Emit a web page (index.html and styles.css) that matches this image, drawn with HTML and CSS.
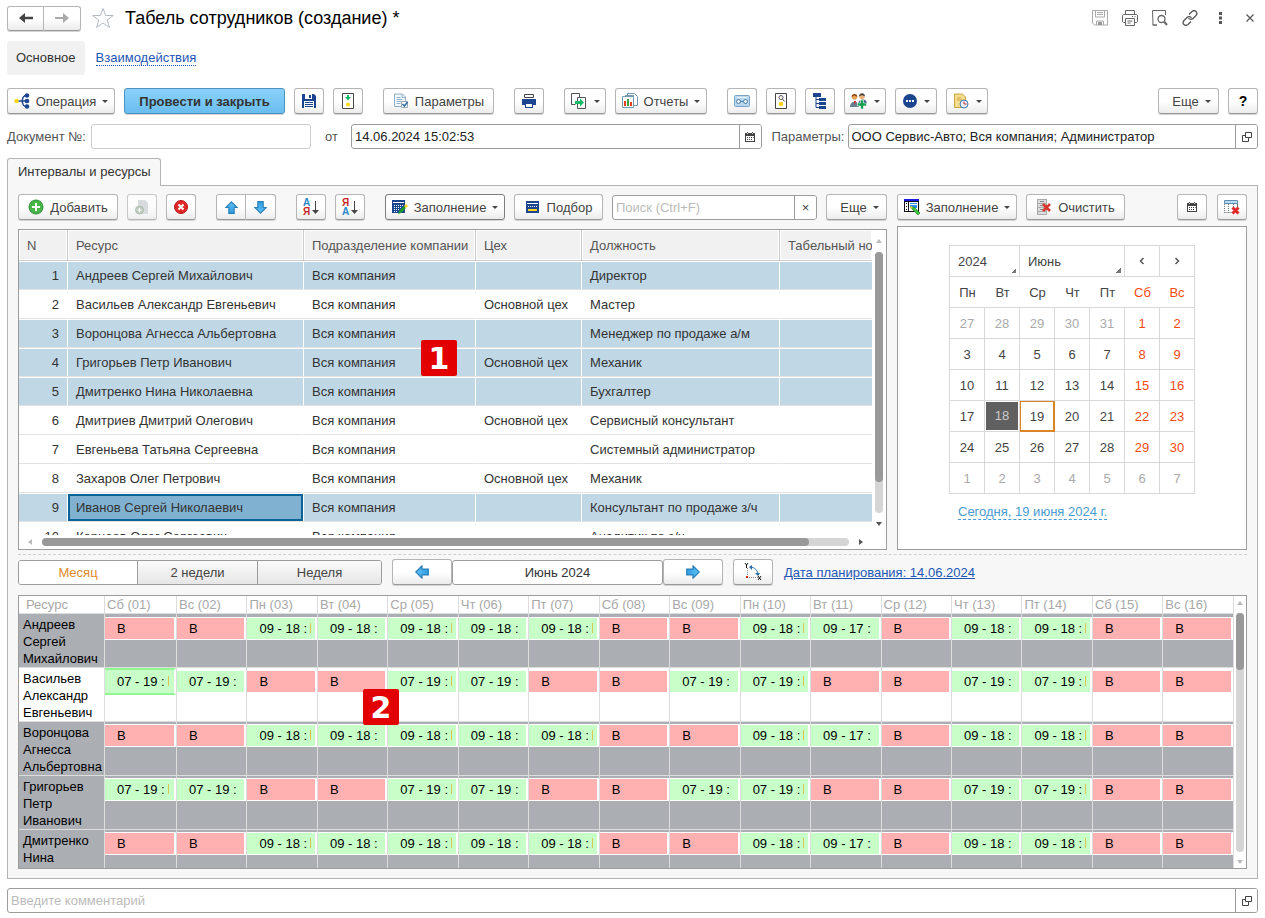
FILE: index.html
```html
<!DOCTYPE html>
<html lang="ru">
<head>
<meta charset="utf-8">
<title>Табель сотрудников (создание) *</title>
<link rel="stylesheet" href="styles.css">
</head>
<body>
<svg class="defs" aria-hidden="true">
  <defs>
    <linearGradient id="blue" x1="0" y1="0" x2="0" y2="1"><stop offset="0" stop-color="#5fc0f5"/><stop offset="1" stop-color="#2f9de0"/></linearGradient>
    <symbol id="cal" viewBox="0 0 10 10"><path d="M0 1h10v9H0z" fill="#444"/><path d="M1 4h8v5H1z" fill="#fff"/><path d="M2 0h1v2H2zM7 0h1v2H7z" fill="#444"/><path d="M2 5h1v1H2zM4 5h1v1H4zM6 5h1v1H6zM2 7h1v1H2zM4 7h1v1H4zM6 7h1v1H6zM8 5h.6v1H8z" fill="#444"/><path d="M2 1h1v1H2zM7 1h1v1H7z" fill="#ddd"/></symbol>
    <symbol id="open" viewBox="0 0 10 10"><path d="M3.500.5h6v5h-6zM3 3.500H.5v6h6V6" fill="none" stroke="#444"/></symbol>
    <symbol id="up" viewBox="0 0 12 12"><path d="M6 .7 11.300 6H8.500v5.400h-5V6H.7z" fill="url(#blue)" stroke="#2a7fb8"/></symbol>
    <symbol id="calc" viewBox="0 0 16 16"><path d="M0 1h13v13H0z" fill="#1c4590"/><path d="M1 3h11v1H1z" fill="#fff"/><path d="M2 6h1v1H2zM4 6h1v1H4zM6 6h1v1H6zM8 6h1v1H8zM10 6h1v1h-1zM2 8h1v1H2zM4 8h1v1H4zM6 8h1v1H6zM8 8h1v1H8zM2 10h1v1H2zM4 10h1v1H4zM6 10h1v1H6zM2 12h1v1H2zM4 12h1v1H4z" fill="#fff"/></symbol>
  </defs>
</svg>
<div class="page">
  <header class="titlebar">
    <div class="pair">
      <button class="btn nav" aria-label="Назад"><svg width="14" height="12" viewBox="0 0 14 12"><path d="M0 6l6-5v3.800h8v2.400H6V11z" fill="#444"/></svg></button><button class="btn nav" aria-label="Вперед"><svg width="14" height="12" viewBox="0 0 14 12"><path d="M14 6L8 1v4H0v2h8v4z" fill="#aaa"/></svg></button>
    </div>
    <svg class="star" width="24" height="22" viewBox="0 0 24 22"><path d="M12 1.500l2.700 7h7.600l-6.100 4.600 2.300 7.400L12 16l-6.500 4.500 2.300-7.400L1.700 8.500h7.600z" fill="#fff" stroke="#b4bac2"/></svg>
    <h1>Табель сотрудников (создание) *</h1>
    <div class="tools">
      <svg width="16" height="16" viewBox="0 0 16 16" fill="none" stroke="#aaa"><path d="M.5.5h15v14.500H2.500l-2-2z"/><path d="M3.500.5v6.500h9V.5M5 2.500h6M5 4.500h6M4.500 15v-4h7v4"/><path d="M6 12h4v3H6z" fill="#999" stroke="none"/></svg>
      <svg width="16" height="16" viewBox="0 0 16 16" fill="none" stroke="#666"><path d="M3.500 4V.5h9V4M3.500 12.500h-2l-1-1v-6l1-1h13l1 1v6l-1 1h-2M3.500 8.500h9v7h-9zM5.500 11h5M5.500 13h3M10 6.500h1M12.500 6.500h1"/></svg>
      <svg width="16" height="16" viewBox="0 0 16 16" fill="none" stroke="#666"><path d="M5 15H1L.5.5h13V5M.5 15H5"/><circle cx="9.500" cy="9" r="3.500" stroke-width="1.300"/><path d="M12 11.500l3 3.500" stroke-width="2"/></svg>
      <svg width="16" height="16" viewBox="0 0 16 16" fill="none" stroke="#555" stroke-width="1.300"><path d="M7 4.500l3-3c2.500-2.500 6.500 1 4 4l-3 3c-1.500 1.500-3.500 1-4.500-.5M9 11.500l-3 3c-3 2.500-6.500-1-4-4l3-3c1.500-1.500 3.500-1 4.500.5"/></svg>
      <svg width="16" height="16" viewBox="0 0 16 16" fill="#555"><path d="M7 2h3v3H7zM7 6.500h3v3H7zM7 11h3v3H7z"/></svg>
      <svg width="16" height="16" viewBox="0 0 16 16" fill="none" stroke="#555" stroke-width="1.200"><path d="M4.500 4.500l7 7M11.500 4.500l-7 7"/></svg>
    </div>
  </header>

  <nav class="sections"><a class="current" href="#">Основное</a><a class="dotted" href="#">Взаимодействия</a></nav>

  <div class="bar commands">
    <button class="btn w108"><svg width="16" height="16" viewBox="0 0 16 16"><path d="M3 8h9M13 2.500c-4 0-4 2-5 5.500 1 3.500 1 5.500 5 5.500" fill="none" stroke="#1c4590" stroke-width="1.500"/><circle cx="2.500" cy="8" r="2.300" fill="#fbd51e"/><circle cx="13" cy="2.500" r="2.300" fill="#1c4590"/><circle cx="13" cy="8" r="2.300" fill="#1c4590"/><circle cx="13" cy="13.500" r="2.300" fill="#1c4590"/></svg><span>Операция</span><i class="caret"></i></button>
    <button class="btn primary">Провести и закрыть</button>
    <button class="btn icon" aria-label="Записать"><svg width="16" height="16" viewBox="0 0 16 16"><path d="M1 1h12l2 2v12H1z" fill="#1c4590"/><path d="M4 1h7v5H4z" fill="#fff"/><path d="M8 2h2v3H8z" fill="#1c4590"/><path d="M3 8h10v7H3z" fill="#fff"/><path d="M4 9h8v1H4zM4 11h8v1H4zM4 13h8v1H4z" fill="#1c4590"/></svg></button>
    <button class="btn icon" aria-label="Провести"><svg width="16" height="16" viewBox="0 0 16 16"><path d="M2.500.5h11v15h-11z" fill="#fff" stroke="#444"/><path d="M7 2h2v2h2L8 7.500 5 4h2z" fill="#14b866"/><circle cx="8" cy="11.500" r="2" fill="#fbd51e"/></svg></button>
    <button class="btn w111 gap"><svg width="16" height="16" viewBox="0 0 16 16"><path d="M1.500 1h8l3 3v9.500h-11z" fill="#f5f9fc" stroke="#8fb0c8"/><path d="M9 1v3.500h3.500M3.500 4.500h4M3.500 6.500h6M3.500 8.500h5M3.500 10.500h4" fill="none" stroke="#8fb0c8"/><path d="M8.500 8.500h6v6h-6z" fill="#fff" stroke="#9ab"/><path d="M9.500 11l2 2 3-4" fill="none" stroke="#2a6da5" stroke-width="1.500"/></svg><span>Параметры</span></button>
    <button class="btn icon gap" aria-label="Печать"><svg width="16" height="16" viewBox="0 0 16 16"><path d="M3.500 1.500h9v3h-9z" fill="#fff" stroke="#444"/><path d="M1 6h14v6H1z" fill="#1c4590"/><path d="M4 9h8v6H4z" fill="#1c4590"/><path d="M5 11h6v3H5z" fill="#fff"/></svg></button>
    <button class="btn drop gap" aria-label="Создать на основании"><svg width="18" height="16" viewBox="0 0 18 16"><path d="M9.500 4V.5h-8v11h4M7.500 4.500h8v11h-8z" fill="none" stroke="#555"/><path d="M5 8h5V5.500l4 4-4 4V11H5z" fill="#14b866"/></svg><i class="caret"></i></button>
    <button class="btn w92"><svg width="16" height="16" viewBox="0 0 16 16"><path d="M5.500.5h7l3 3v9h-10zM3.500 2.500h8v10h-8z" fill="#fff" stroke="#6f9ab0"/><path d="M.5 3.500h11v11H.5z" fill="#fff" stroke="#6f9ab0"/><path d="M2 8h2v5H2z" fill="#e0401c"/><path d="M5 6h2v7H5z" fill="#3aa03a"/><path d="M8 9h2v4H8z" fill="#e0401c"/></svg><span>Отчеты</span><i class="caret"></i></button>
    <button class="btn icon gap" aria-label="Запись"><svg width="16" height="12" viewBox="0 0 16 12"><rect x=".5" y=".5" width="15" height="11" rx="1" fill="#b8d8f0" stroke="#7ba4c4"/><path d="M3 2.500h10" stroke="#e8f3fb"/><circle cx="4.500" cy="6.500" r="2" fill="#e8f3fb" stroke="#4c7ea5"/><circle cx="11.500" cy="6.500" r="2" fill="#e8f3fb" stroke="#4c7ea5"/><path d="M6.500 6.500h3" stroke="#4c7ea5"/></svg></button>
    <button class="btn icon" aria-label="Просмотр"><svg width="16" height="16" viewBox="0 0 16 16"><path d="M2.500.5h11v15h-11z" fill="#fff" stroke="#444"/><circle cx="8" cy="4.500" r="2" fill="none" stroke="#555"/><path d="M9.500 6l2 2.500" stroke="#555"/><circle cx="8" cy="11" r="2.300" fill="#fbd51e"/></svg></button>
    <button class="btn icon" aria-label="Структура"><svg width="16" height="16" viewBox="0 0 16 16" fill="#1c4590"><path d="M1 0h8v4H1zM7 5h7v3H7zM7 9h7v3H7zM7 13h7v3H7z"/><path d="M4 4v10.500h3M4 6.500h3M4 10.500h3" fill="none" stroke="#1c4590"/></svg></button>
    <button class="btn drop" aria-label="Сотрудники"><svg width="18" height="16" viewBox="0 0 18 16"><circle cx="4.500" cy="4" r="2.700" fill="#e8a45a"/><path d="M1.500 4c0-4 6-4 6 0L4.500 2.500z" fill="#8a4a18"/><circle cx="12" cy="3.500" r="2.700" fill="#edb27a"/><path d="M9 3.500c0-4.500 6-4.500 6 0l-3-1.500z" fill="#444"/><path d="M0 14c0-7 9-7 9 0z" fill="#6b7f92"/><path d="M8 12c0-7 9-7 9-1z" fill="#3e5d85"/><path d="M4 8l.6 4L6 8z" fill="#d22"/><path d="M10.500 7h3v3h3v3h-3v3h-3v-3h-3v-3h3z" fill="#12a050" stroke="#fff" stroke-width=".6"/></svg><i class="caret"></i></button>
    <button class="btn drop" aria-label="Действия"><svg width="16" height="16" viewBox="0 0 16 16"><circle cx="8" cy="8" r="7" fill="#1c4590"/><path d="M4 7h2v2H4zM7 7h2v2H7zM10 7h2v2h-2z" fill="#fff"/></svg><i class="caret"></i></button>
    <button class="btn drop" aria-label="История"><svg width="18" height="16" viewBox="0 0 18 16"><path d="M2.500 1h8l3 3v10.500h-11z" fill="#f6dc8c" stroke="#c9a646"/><path d="M5 5h4M5 7h5" stroke="#c9a646"/><circle cx="12" cy="11" r="4" fill="#e6f1fa" stroke="#3d78b4"/><path d="M12 8.500V11h2.500" fill="none" stroke="#c22"/></svg><i class="caret"></i></button>
    <button class="btn w61 push"><span>Еще</span><i class="caret"></i></button>
    <button class="btn icon help">?</button>
  </div>

  <div class="form">
    <label class="l-doc" for="doc">Документ №:</label>
    <div class="field doc"><input id="doc" type="text"></div>
    <label class="l-from" for="date">от</label>
    <div class="field dark grow"><input id="date" type="text" value="14.06.2024 15:02:53"><button aria-label="Выбрать дату"><svg width="10" height="10"><use href="#cal"/></svg></button></div>
    <label class="l-par" for="par">Параметры:</label>
    <div class="field dark grow"><input id="par" type="text" value="ООО Сервис-Авто; Вся компания; Администратор"><button aria-label="Открыть"><svg width="10" height="10"><use href="#open"/></svg></button></div>
  </div>

  <div class="tab">Интервалы и ресурсы</div>
  <main class="panel">
    <div class="panes">
      <section class="left">
        <div class="bar">
          <button class="btn w100"><svg width="16" height="16" viewBox="0 0 16 16"><circle cx="8" cy="8" r="7" fill="#48b648" stroke="#2b8f35"/><path d="M7 4h2v3h3v2H9v3H7V9H4V7h3z" fill="#fff"/></svg><span>Добавить</span></button>
          <button class="btn icon off" aria-label="Скопировать" disabled><svg width="16" height="16" viewBox="0 0 16 16"><path d="M4 1h7l3 3v11H4z" fill="#ccd0d3"/><circle cx="5.500" cy="11" r="4" fill="#a9bcab" stroke="#8fa892"/><path d="M5 9h1v1.500h1.500v1H6V13H5v-1.500H3.500v-1H5z" fill="#fff"/></svg></button>
          <button class="btn icon" aria-label="Удалить"><svg width="16" height="16" viewBox="0 0 16 16"><circle cx="8" cy="8" r="6.500" fill="#e02828" stroke="#b81818"/><path d="M5.500 5.500l5 5M10.500 5.500l-5 5" stroke="#fff" stroke-width="2"/></svg></button>
          <div class="pair gap"><button class="btn icon" aria-label="Вверх"><svg width="13" height="13"><use href="#up"/></svg></button><button class="btn icon" aria-label="Вниз"><svg class="r180" width="13" height="13"><use href="#up"/></svg></button></div>
          <button class="btn icon gap" aria-label="По возрастанию"><span class="sort"><b class="b">А</b><b class="r">Я</b></span><svg width="7" height="15" viewBox="0 0 7 15"><path d="M3 1h1v9h3l-3.500 4L0 10h3z" fill="#444"/></svg></button>
          <button class="btn icon" aria-label="По убыванию"><span class="sort"><b class="r">Я</b><b class="b">А</b></span><svg width="7" height="15" viewBox="0 0 7 15"><path d="M3 1h1v9h3l-3.500 4L0 10h3z" fill="#444"/></svg></button>
          <button class="btn w120 strong gap"><svg width="16" height="16" viewBox="0 0 16 16"><use href="#calc"/><path d="M6 15l1-3 5-5 2 2-5 5z" fill="#1f9b2c"/><path d="M12 7l2-2 2 2-2 2z" fill="#fbd51e"/></svg><span>Заполнение</span><i class="caret"></i></button>
          <button class="btn w89"><svg width="16" height="16" viewBox="0 0 16 16"><path d="M1 2h13v12H1z" fill="#1c4590"/><path d="M2 4h11v1H2z" fill="#fff"/><path d="M3 7h1v1H3zM5 7h1v1H5zM7 7h1v1H7zM9 7h1v1H9zM11 7h1v1h-1z" fill="#fff"/><path d="M3 10h9v2H3z" fill="#fbd51e"/></svg><span>Подбор</span></button>
          <div class="field dark grow"><input type="text" aria-label="Поиск" placeholder="Поиск (Ctrl+F)"><button aria-label="Очистить поиск">×</button></div>
          <button class="btn w61"><span>Еще</span><i class="caret"></i></button>
        </div>
        <div class="grid">
          <div class="grid-main">
          <div class="grid-view">
            <table class="res">
              <colgroup><col class="c1"><col class="c2"><col class="c3"><col class="c4"><col class="c5"><col></colgroup>
              <thead><tr><th>N</th><th>Ресурс</th><th>Подразделение компании</th><th>Цех</th><th>Должность</th><th>Табельный номер</th></tr></thead>
              <tbody>
                <tr class="sel"><td>1</td><td>Андреев Сергей Михайлович</td><td>Вся компания</td><td></td><td>Директор</td><td></td></tr>
                <tr><td>2</td><td>Васильев Александр Евгеньевич</td><td>Вся компания</td><td>Основной цех</td><td>Мастер</td><td></td></tr>
                <tr class="sel"><td>3</td><td>Воронцова Агнесса Альбертовна</td><td>Вся компания</td><td></td><td>Менеджер по продаже а/м</td><td></td></tr>
                <tr class="sel"><td>4</td><td>Григорьев Петр Иванович</td><td>Вся компания</td><td>Основной цех</td><td>Механик</td><td></td></tr>
                <tr class="sel"><td>5</td><td>Дмитренко Нина Николаевна</td><td>Вся компания</td><td></td><td>Бухгалтер</td><td></td></tr>
                <tr><td>6</td><td>Дмитриев Дмитрий Олегович</td><td>Вся компания</td><td>Основной цех</td><td>Сервисный консультант</td><td></td></tr>
                <tr><td>7</td><td>Евгеньева Татьяна Сергеевна</td><td>Вся компания</td><td></td><td>Системный администратор</td><td></td></tr>
                <tr><td>8</td><td>Захаров Олег Петрович</td><td>Вся компания</td><td>Основной цех</td><td>Механик</td><td></td></tr>
                <tr class="sel"><td>9</td><td class="active">Иванов Сергей Николаевич</td><td>Вся компания</td><td></td><td>Консультант по продаже з/ч</td><td></td></tr>
                <tr><td>10</td><td>Корнеев Олег Сергеевич</td><td>Вся компания</td><td></td><td>Аналитик по з/ч</td><td></td></tr>
              </tbody>
            </table>
          </div>
          <div class="hscroll"><i class="tri l"></i><div class="track"><div class="thumb"></div></div><i class="tri r"></i></div>
          </div>
          <div class="vscroll"><i class="tri u"></i><div class="track"><div class="thumb"></div></div><i class="tri d"></i></div>
          <span class="badge one">1</span>
        </div>
      </section>
      <section class="right">
        <div class="bar">
          <button class="btn w120"><svg width="16" height="16" viewBox="0 0 16 16"><path d="M0 0h15v13H0z" fill="#111"/><path d="M0 0h15v2H0z" fill="#1a1ae0"/><path d="M1 3h3v9H1zM5 3h9v9H5z" fill="#fff"/><path d="M2 4h1v1H2zM2 7h1v1H2zM2 10h1v1H2z" fill="#111"/><path d="M6 4h7v1H6zM6 6h7v3H6z" fill="#2a8ff0"/><path d="M7 9l3-1 6 6-2 2z" fill="#3cc43c" stroke="#1a701a" stroke-width=".6"/><path d="M6 7l3 1-2 2z" fill="#fbd51e"/></svg><span>Заполнение</span><i class="caret"></i></button>
          <button class="btn w99"><svg width="16" height="16" viewBox="0 0 16 16"><path d="M1 0h10v16H1z" fill="#aaa"/><path d="M2 1h8v3H2zM2 5h8v3H2zM2 9h8v3H2zM2 13h8v2H2z" fill="#ddd"/><path d="M4 2h4v1H4zM4 6h4v1H4zM4 10h4v1H4z" fill="#888"/><path d="M7 5l7 7M14 5l-7 7" stroke="#d8352c" stroke-width="2.500"/></svg><span>Очистить</span></button>
          <button class="btn icon push" aria-label="Календарь"><svg width="10" height="10"><use href="#cal"/></svg></button>
          <button class="btn icon last" aria-label="Удалить столбец"><svg width="16" height="16" viewBox="0 0 16 16"><path d="M.5 1.500h13v3H.5z" fill="#b8d8f0" stroke="#5d8db0"/><path d="M.5 5v9M.5 13.500h8M4.500 5v9M9.500 5v4" fill="none" stroke="#777" stroke-dasharray="1 1"/><path d="M13.500 5v3" stroke="#666"/><path d="M8.500 8.500l6 6M14.500 8.500l-6 6" stroke="#e02828" stroke-width="3"/></svg></button>
        </div>
        <div class="calbox">
          <div class="calendar">
            <div class="cal-head"><button class="year">2024</button><button class="month">Июнь</button><button aria-label="Предыдущий месяц"><svg width="6" height="8" viewBox="0 0 6 8"><path d="M4.500 1l-3 3 3 3" fill="none" stroke="#555" stroke-width="1.500"/></svg></button><button aria-label="Следующий месяц"><svg width="6" height="8" viewBox="0 0 6 8"><path d="M1.500 1l3 3-3 3" fill="none" stroke="#555" stroke-width="1.500"/></svg></button></div>
            <table class="days">
              <thead><tr><th>Пн</th><th>Вт</th><th>Ср</th><th>Чт</th><th>Пт</th><th>Сб</th><th>Вс</th></tr></thead>
              <tbody>
                <tr><td class="o">27</td><td class="o">28</td><td class="o">29</td><td class="o">30</td><td class="o">31</td><td>1</td><td>2</td></tr>
                <tr><td>3</td><td>4</td><td>5</td><td>6</td><td>7</td><td>8</td><td>9</td></tr>
                <tr><td>10</td><td>11</td><td>12</td><td>13</td><td>14</td><td>15</td><td>16</td></tr>
                <tr><td>17</td><td class="picked"><span>18</span></td><td class="today">19</td><td>20</td><td>21</td><td>22</td><td>23</td></tr>
                <tr><td>24</td><td>25</td><td>26</td><td>27</td><td>28</td><td>29</td><td>30</td></tr>
                <tr><td class="o">1</td><td class="o">2</td><td class="o">3</td><td class="o">4</td><td class="o">5</td><td class="o">6</td><td class="o">7</td></tr>
              </tbody>
            </table>
            <a class="now" href="#">Сегодня, 19 июня 2024 г.</a>
          </div>
        </div>
      </section>
    </div>
    <div class="splitter"></div>
    <div class="bar period">
      <div class="segments"><button class="on">Месяц</button><button>2 недели</button><button>Неделя</button></div>
      <div class="stepper"><button class="btn w60" aria-label="Назад"><svg class="r270" width="14" height="14"><use href="#up"/></svg></button><input type="text" aria-label="Период" value="Июнь 2024"><button class="btn w60" aria-label="Вперед"><svg class="r90" width="14" height="14"><use href="#up"/></svg></button></div>
      <button class="btn w40" aria-label="Повернуть"><svg width="18" height="18" viewBox="0 0 18 18"><path d="M3.500 5v10M5 14.500h9" fill="none" stroke="#888" stroke-dasharray="1 1"/><path d="M2 13h2v2H2z" fill="#d82a10"/><path d="M6 4c5 0 8 4 8 8" fill="none" stroke="#2a6da5"/><path d="M8 2v5L5 4zM11 10h5l-2 3z" fill="#2a6da5"/><path d="M1 0l1.500 2L4 0M2.500 2v3M14 13l3 4M17 13l-3 4" fill="none" stroke="#111"/></svg></button>
      <a class="plan" href="#">Дата планирования: 14.06.2024</a>
    </div>
    <div class="schedule">
      <div class="sched-view">
        <table class="sched">
          <colgroup><col class="name"><col class="first"></colgroup>
          <thead><tr><th>Ресурс</th><th>Сб (01)</th><th>Вс (02)</th><th>Пн (03)</th><th>Вт (04)</th><th>Ср (05)</th><th>Чт (06)</th><th>Пт (07)</th><th>Сб (08)</th><th>Вс (09)</th><th>Пн (10)</th><th>Вт (11)</th><th>Ср (12)</th><th>Чт (13)</th><th>Пт (14)</th><th>Сб (15)</th><th>Вс (16)</th></tr></thead>
          <tbody>
            <tr><th>Андреев Сергей Михайлович</th><td><p class="off">В</p></td><td><p class="off">В</p></td><td><p class="cut">09 - 18 :</p></td><td><p>09 - 18 :</p></td><td><p class="cut">09 - 18 :</p></td><td><p>09 - 18 :</p></td><td><p class="cut">09 - 18 :</p></td><td><p class="off">В</p></td><td><p class="off">В</p></td><td><p class="cut">09 - 18 :</p></td><td><p>09 - 17 :</p></td><td><p class="off">В</p></td><td><p>09 - 18 :</p></td><td><p class="cut">09 - 18 :</p></td><td><p class="off">В</p></td><td><p class="off">В</p></td></tr>
            <tr class="free"><th>Васильев Александр Евгеньевич</th><td class="cursor"><p class="cut">07 - 19 :</p></td><td><p>07 - 19 :</p></td><td><p class="off">В</p></td><td><p class="off">В</p></td><td><p class="cut">07 - 19 :</p></td><td><p>07 - 19 :</p></td><td><p class="off">В</p></td><td><p class="off">В</p></td><td><p>07 - 19 :</p></td><td><p class="cut">07 - 19 :</p></td><td><p class="off">В</p></td><td><p class="off">В</p></td><td><p>07 - 19 :</p></td><td><p class="cut">07 - 19 :</p></td><td><p class="off">В</p></td><td><p class="off">В</p></td></tr>
            <tr><th>Воронцова Агнесса Альбертовна</th><td><p class="off">В</p></td><td><p class="off">В</p></td><td><p class="cut">09 - 18 :</p></td><td><p>09 - 18 :</p></td><td><p class="cut">09 - 18 :</p></td><td><p>09 - 18 :</p></td><td><p class="cut">09 - 18 :</p></td><td><p class="off">В</p></td><td><p class="off">В</p></td><td><p class="cut">09 - 18 :</p></td><td><p>09 - 17 :</p></td><td><p class="off">В</p></td><td><p>09 - 18 :</p></td><td><p class="cut">09 - 18 :</p></td><td><p class="off">В</p></td><td><p class="off">В</p></td></tr>
            <tr><th>Григорьев Петр Иванович</th><td><p class="cut">07 - 19 :</p></td><td><p>07 - 19 :</p></td><td><p class="off">В</p></td><td><p class="off">В</p></td><td><p class="cut">07 - 19 :</p></td><td><p>07 - 19 :</p></td><td><p class="off">В</p></td><td><p class="off">В</p></td><td><p>07 - 19 :</p></td><td><p class="cut">07 - 19 :</p></td><td><p class="off">В</p></td><td><p class="off">В</p></td><td><p>07 - 19 :</p></td><td><p class="cut">07 - 19 :</p></td><td><p class="off">В</p></td><td><p class="off">В</p></td></tr>
            <tr><th>Дмитренко Нина</th><td><p class="off">В</p></td><td><p class="off">В</p></td><td><p class="cut">09 - 18 :</p></td><td><p>09 - 18 :</p></td><td><p class="cut">09 - 18 :</p></td><td><p>09 - 18 :</p></td><td><p class="cut">09 - 18 :</p></td><td><p class="off">В</p></td><td><p class="off">В</p></td><td><p class="cut">09 - 18 :</p></td><td><p>09 - 17 :</p></td><td><p class="off">В</p></td><td><p>09 - 18 :</p></td><td><p class="cut">09 - 18 :</p></td><td><p class="off">В</p></td><td><p class="off">В</p></td></tr>
          </tbody>
        </table>
      </div>
      <div class="vscroll"><i class="tri u"></i><div class="track"><div class="thumb short"></div></div><i class="tri d pale"></i></div>
      <span class="badge two">2</span>
    </div>
  </main>
  <div class="field dark comment"><input type="text" aria-label="Комментарий" placeholder="Введите комментарий"><button aria-label="Открыть комментарий"><svg width="10" height="10"><use href="#open"/></svg></button></div>
</div>
</body>
</html>
```
FILE: styles.css
```css
* { box-sizing: border-box; }
body { margin: 0; background: #fff; color: #333; }
body, button, input { font-family: "Liberation Sans", Arial, sans-serif; font-size: 13px; }
button { cursor: pointer; color: #444; }
.defs { position: absolute; width: 0; height: 0; }
.page { padding: 0 7px 5px; }

.titlebar { display: flex; align-items: center; height: 36px; }
.star { margin: 0 10px; }
h1 { margin: 0; font-size: 18px; font-weight: 400; color: #000; }
.tools { display: flex; gap: 14px; margin-left: auto; }

.pair { display: flex; }
.pair .btn:first-child { border-radius: 3px 0 0 3px; }
.pair .btn:last-child { border-radius: 0 3px 3px 0; border-left: 0; }

.sections { display: flex; align-items: center; gap: 11px; margin-top: 5px; height: 34px; }
.sections a { color: #1d56b5; text-decoration: none; }
.sections .current { padding: 0 9px; line-height: 34px; color: #333; background: #f1f1f1; border-radius: 3px; }
.sections .dotted { border-bottom: 1px dotted #1d56b5; }

.bar { display: flex; align-items: center; gap: 9px; }
.commands { margin-top: 13px; }
.gap { margin-left: 11px; }
.push { margin-left: auto; }
.last { margin-left: 1px; }

.btn {
  display: flex; align-items: center; justify-content: center; flex: none;
  height: 26px; padding: 0; white-space: nowrap;
  border: 1px solid #b5b5b5; border-bottom-color: #999; border-radius: 3px;
  background: linear-gradient(#fff 50%, #ececec);
  box-shadow: 0 1px 0 #d4d4d4;
}
.btn svg + span { margin-left: 6px; }
.btn .caret { margin-left: 6px; }
.caret { border: 3px solid transparent; border-top-color: #444; border-bottom: 0; }
.strong { border-color: #7d7d7d; }
.off.btn { opacity: .7; }
.nav { width: 37px; height: 25px; }
.icon { width: 30px; }
.drop { width: 42px; }
.w40 { width: 40px; }
.w60 { width: 60px; }
.w61 { width: 61px; }
.w61 span { margin-left: 6px; }
.w89 { width: 89px; }
.w92 { width: 92px; }
.w99 { width: 99px; }
.w100 { width: 100px; }
.w108 { width: 108px; }
.w111 { width: 111px; }
.w120 { width: 120px; }
.primary { width: 161px; font-weight: 700; color: #333; background: linear-gradient(#8bd2fb, #69bdef); border-color: #4b93c0; }
.help { color: #000; font-size: 14px; font-weight: 700; }
.r90 { transform: rotate(90deg); }
.r180 { transform: rotate(180deg); }
.r270 { transform: rotate(270deg); }
.sort { display: flex; flex-direction: column; margin-right: 2px; font-size: 10px; line-height: 9px; }
.btn .sort + svg { margin: 0; }
.sort .b { color: #2a86c8; }
.sort .r { color: #c62828; }

.form { display: flex; align-items: center; margin-top: 10px; color: #555; }
.l-doc { width: 84px; white-space: nowrap; }
.l-from { width: 40px; padding-left: 14px; }
.l-par { width: 86px; padding-left: 10px; }
.field { display: flex; height: 25px; min-width: 0; border: 1px solid #ccc; border-radius: 3px; background: #fff; overflow: hidden; }
.field.dark { border-color: #9c9c9c; }
.field input { flex: 1; min-width: 0; padding: 0 3px; border: 0; background: none; color: #222; outline: 0; }
.field button { display: flex; align-items: center; justify-content: center; width: 22px; padding: 0; border: 0; border-left: 1px solid #9c9c9c; background: #fff; }
.field.doc { width: 220px; }
.grow { flex: 1; }
::placeholder { color: #bbb; opacity: 1; }

.tab { position: relative; z-index: 1; width: fit-content; height: 28px; margin: 9px 0 -1px; padding: 0 9px 0 10px; line-height: 26px; color: #333; background: #f7f7f7; border: 1px solid #b3b3b3; border-bottom: 0; border-radius: 3px 3px 0 0; }
.panel { padding: 8px 10px 9px; background: #f7f7f7; border: 1px solid #b3b3b3; }
.panes { display: flex; gap: 10px; }
.left { flex: 1; min-width: 0; }
.right { display: flex; flex-direction: column; width: 350px; }

.grid { position: relative; display: flex; margin-top: 9px; background: #fff; border: 1px solid #9c9c9c; }
.grid-main { flex: 1; min-width: 0; }
.grid-view { height: 305px; overflow: hidden; }
.res { width: 100%; table-layout: fixed; border-collapse: separate; border-spacing: 0; }
.c1 { width: 49px; }
.c2 { width: 236px; }
.c3 { width: 172px; }
.c4 { width: 106px; }
.c5 { width: 198px; }
.res th, .res td { padding: 0 8px; overflow: hidden; white-space: nowrap; text-align: left; font-weight: 400; border-right: 1px solid #fff; }
.res th { height: 31px; padding-right: 0; color: #555; background: #f1f1f1; border-right-color: #ccc; border-bottom: 1px solid #ccc; box-shadow: inset 0 0 0 1px #fff; }
.res th:last-child, .res td:last-child { border-right: 0; }
.res td { height: 29px; border-top: 1px solid #fff; border-bottom: 1px solid #e2e2e2; }
.res td:first-child { text-align: right; }
.res .sel td { background: #c0d8e6; }
.res .sel .active { background: #80b1d0; box-shadow: inset 0 0 0 2px #0a6396; }

.tri { width: 0; height: 0; border: 3px solid transparent; }
.tri.u { border-bottom: 4px solid #bbb; border-top: 0; }
.tri.d { border-top: 4px solid #555; border-bottom: 0; }
.tri.l { border-right: 4px solid #bbb; border-left: 0; }
.tri.r { border-left: 4px solid #555; border-right: 0; }
.tri.pale { border-top-color: #bbb; }
.track { flex: 1; background: #d5d5d5; border-radius: 4px; }
.thumb { background: #999; border-radius: 4px; }
.hscroll { display: flex; align-items: center; gap: 10px; height: 14px; padding: 0 9px; }
.hscroll .track, .hscroll .thumb { height: 8px; }
.hscroll .thumb { width: 95%; }
.vscroll { display: flex; flex-direction: column; align-items: center; gap: 9px; width: 14px; padding: 9px 0 23px; }
.vscroll .track, .vscroll .thumb { width: 8px; }
.vscroll .thumb { height: 88%; }
.schedule .vscroll { gap: 8px; width: 12px; padding: 5px 0 4px; }
.vscroll .thumb.short { height: 24%; }

.badge { position: absolute; display: flex; align-items: center; justify-content: center; width: 36px; height: 36px; border-radius: 2px; background: #e20000; color: #fff; font: 700 30px "DejaVu Sans", sans-serif; }
.badge.one { left: 402px; top: 110px; }
.badge.two { left: 344px; top: 93px; }

.calbox { flex: 1; margin-top: 6px; padding-top: 18px; background: #fff; border: 1px solid #9c9c9c; }
.calendar { width: 246px; margin: 0 auto; }
.cal-head { display: grid; grid-template-columns: 70px 105px 35px 34px; height: 32px; border: 1px solid #d9d9d9; }
.cal-head button { display: flex; align-items: center; justify-content: center; padding: 0; border: 0; border-right: 1px solid #d9d9d9; background: none; }
.cal-head button:last-child { border-right: 0; }
.cal-head .year, .cal-head .month { justify-content: flex-start; padding-left: 8px; background: linear-gradient(135deg, transparent 50%, #777 50%) no-repeat right 3px bottom 3px / 5px 5px; }
.days { width: 246px; table-layout: fixed; border-collapse: separate; border-spacing: 0; border-left: 1px solid #d9d9d9; }
.days th, .days td { height: 31px; padding: 0; text-align: center; font-weight: 400; color: #444; border-bottom: 1px solid #d9d9d9; }
.days td, .days th:last-child { border-right: 1px solid #d9d9d9; }
.days th:nth-child(n+6), .days td:nth-child(n+6) { color: #f44a11; }
.days td.o.o { color: #aaa; }
.days .picked { padding: 1px; }
.picked span { display: block; line-height: 28px; color: #ccc; background: #606060; }
.days .today { border-color: #dd8426; box-shadow: inset 1px 1px 0 #dd8426, inset -1px -1px 0 #dd8426; }
.now { display: inline-block; margin: 10px 0 0 9px; color: #4a9bd3; text-decoration: none; border-bottom: 1px dashed #4a9bd3; }

.splitter { margin: 4px 0; border-top: 1px dashed #d0d0d0; }
.period { gap: 10px; }
.segments { display: grid; grid-template-columns: 119px 120px 1fr; width: 364px; height: 25px; border: 1px solid #9c9c9c; border-radius: 3px; overflow: hidden; }
.segments button { padding: 0; border: 0; border-right: 1px solid #9c9c9c; background: linear-gradient(#fafafa, #e6e6e6); }
.segments button:last-child { border-right: 0; }
.segments .on { color: #e08a28; background: #fff; }
.stepper { display: flex; align-items: flex-end; }
.stepper input { width: 211px; height: 25px; padding: 0; text-align: center; color: #333; border: 1px solid #9c9c9c; border-radius: 3px; background: #fff; }
.plan { margin-left: 1px; color: #1d56b5; }

.schedule { position: relative; display: flex; height: 274px; margin-top: 10px; background: #fff; border: 1px solid #9c9c9c; }
.sched-view { flex: 1; min-width: 0; overflow: hidden; }
.sched { width: 100%; table-layout: fixed; border-collapse: separate; border-spacing: 0; }
.name { width: 86px; }
.first { width: 72px; }
.sched th { font-weight: 400; text-align: left; }
.sched thead th { height: 18px; padding: 0 2px; line-height: 16px; color: #a8a8a8; white-space: nowrap; border-right: 1px solid #ddd; border-bottom: 1px solid #ddd; }
.sched thead th:first-child { padding-left: 7px; }
.sched tbody th, .sched td { height: 54px; padding: 0; vertical-align: top; background: #abaeb3; border-right: 1px solid #ddd; border-bottom: 1px solid #ddd; }
.sched tbody th { padding: 2px 0 0 4px; line-height: 17px; color: #000; }
.sched .free th, .sched .free td { background: #fff; }
.sched p { height: 23px; margin: 2px 0 0; padding-left: 12px; line-height: 21px; white-space: nowrap; overflow: hidden; color: #000; background: #c8ffc8; border: 1px solid #fff; border-left: 0; border-right-width: 2px; }
.sched tbody tr:first-child p { margin-top: 3px; }
.sched p.off { background: #ffb1b1; }
.sched p.cut::after { content: ""; display: inline-block; height: 10px; margin-left: 3px; border-left: 1px solid #d6c850; }
.sched .cursor p { margin-top: 0; height: 27px; padding-top: 1px; border-top: 2px solid #92f792; border-bottom: 2px solid #92f792; }

.comment { margin-top: 9px; }
```
